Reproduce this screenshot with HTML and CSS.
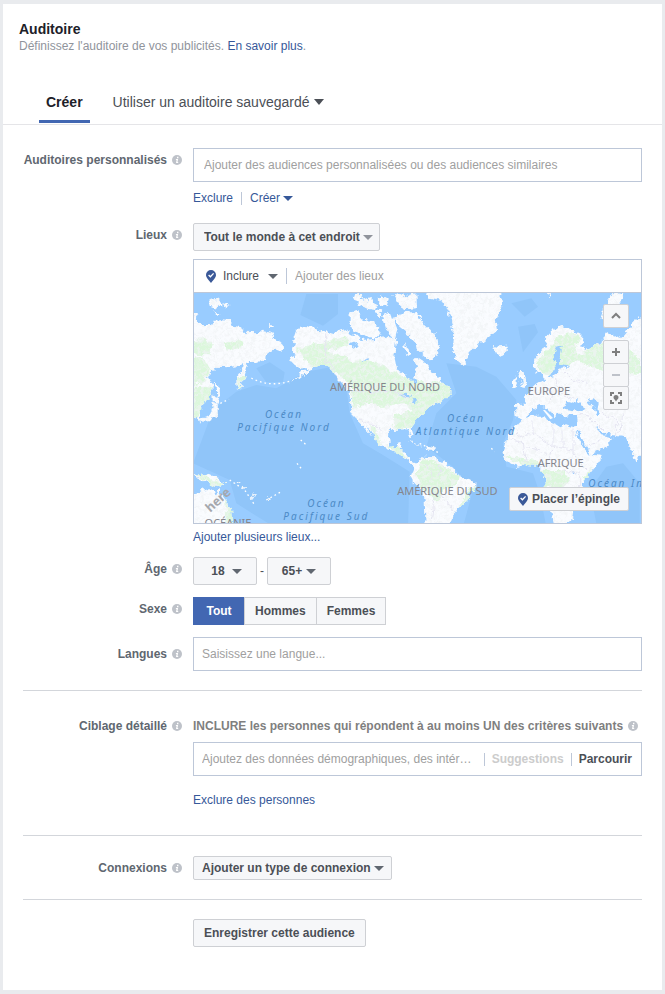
FILE: index.html
```
<!DOCTYPE html>
<html lang="fr">
<head>
    <meta charset="UTF-8">
    <meta name="viewport" content="width=device-width, initial-scale=1.0">
    <title>Auditoire</title>
    <link rel="stylesheet" href="styles.css">
</head>
<body>
    <!-- icônes communes -->
    <svg class="sprite" aria-hidden="true">
        <symbol id="info" viewBox="0 0 10 10">
            <circle cx="5" cy="5" r="5" fill="#bec2c9"/>
            <path d="M5 1.8h1.4v1.4H5zM4 4h2.1L5.5 7.1h.8L6.1 8H4l.6-3.1h-.8z" fill="#fff"/>
        </symbol>
        <symbol id="pin" viewBox="0 0 10 13">
            <path d="M5 0a5 5 0 0 1 5 5c0 3-3 5-5 8C3 10 0 8 0 5a5 5 0 0 1 5-5z" fill="#3b5998"/>
            <path d="M2.6 5l1.8 1.8 3.2-3.4" fill="none" stroke="#fff" stroke-width="1.3"/>
        </symbol>
    </svg>

    <main class="panel">
        <header class="head">
            <h1>Auditoire</h1>
            <p>Définissez l'auditoire de vos publicités. <a href="#">En savoir plus</a>.</p>
        </header>

        <nav class="tabs">
            <button type="button" class="tab active">Créer</button>
            <button type="button" class="tab">Utiliser un auditoire sauvegardé <span class="caret big"></span></button>
        </nav>

        <form class="form">
            <section>
                <div class="row">
                    <label class="label" for="custom">Auditoires personnalisés <svg class="info"><use href="#info"/></svg></label>
                    <div class="field">
                        <input class="text wide" id="custom" type="text" placeholder="Ajouter des audiences personnalisées ou des audiences similaires">
                        <div class="links">
                            <a href="#">Exclure</a>
                            <span class="sep"></span>
                            <button type="button" class="link">Créer <span class="caret"></span></button>
                        </div>
                    </div>
                </div>

                <div class="row">
                    <label class="label" for="places">Lieux <svg class="info"><use href="#info"/></svg></label>
                    <div class="field">
                        <span class="select where">
                            <select aria-label="Personnes"><option>Tout le monde à cet endroit</option></select>
                        </span>
                        <div class="location">
                            <div class="location-bar">
                                <svg class="pin"><use href="#pin"/></svg>
                                <span class="select plain">
                                    <select aria-label="Mode"><option>Inclure</option></select>
                                </span>
                                <span class="sep"></span>
                                <input id="places" type="text" placeholder="Ajouter des lieux">
                            </div>
                            <div class="map">
                                <svg class="world" viewBox="3 9 1341 690" role="img" aria-label="Carte du monde">
                                    <defs>
                                        <filter id="coast" x="-5%" y="-5%" width="110%" height="110%">
                                            <feTurbulence type="fractalNoise" baseFrequency="0.06" numOctaves="3" seed="4"/>
                                            <feDisplacementMap in="SourceGraphic" scale="22" xChannelSelector="R" yChannelSelector="G"/>
                                        </filter>
                                        <filter id="grain" x="0" y="0" width="100%" height="100%">
                                            <feTurbulence type="fractalNoise" baseFrequency="0.09" numOctaves="3" seed="9" result="n"/>
                                            <feColorMatrix in="n" values="0 0 0 0 .88  0 0 0 0 .9  0 0 0 0 .92  4 0 0 0 -1.7"/>
                                            <feComposite in2="SourceGraphic" operator="in"/>
                                        </filter>
                                        <clipPath id="land-clip"><use href="#land"/></clipPath>
                                    </defs>
                                    <rect width="1350" height="710" fill="#99ccff"/>
                                    <!-- eaux profondes -->
                                    <g fill="#90c5f9">
                                        <path d="M340 12h95v60l-45 35-68-32z"/>
                                        <path d="M190 235l40-18 45 30-5 30-50 0zM0 520l60-160 70-55 60-20 60 10 90-50 80-15 40 60 10 80 40 90 60 35 80 50-5 170H250L130 640 110 570z"/>
                                        <path d="M955 40l60-15 20 25-40 30zM975 110l50-8 10 25-45 60zM760 220l90 10 60 30 60 70-10 60-30 70 10 70 80 20 20 60 20 100H810l30-110-60-70-80-60 30-100 60-60z"/>
                                        <path d="M1190 600l50-70 50-10 50 60v120h-130z"/>
                                    </g>
                                    <g filter="url(#coast)">
                                        <path id="land" fill="#fafcff" d="
                                            M-10 70L10 80 20 105 55 105 62 90 85 88 110 92 118 105 145 108 152 128 190 130 210 122 235 130 245 150 262 158 274 170 265 182 247 175 238 182 228 193 205 213 175 220 162 218 164 240 157 262 145 285 132 300 130 275 135 256 147 238 150 222 110 232 70 230 45 262 62 290 50 322 25 345 22 398 8 380 -10 400z
                                            M66 275l8 5 6 40-9 2zM62 340l12 0 0 35-28 18-25 2 2-9 26-8zM62 320l16 4-4 14-12-2z
                                            M48 32l26-6 12 16-14 14-22-8zM90 40l20 8-14 6zM64 64l14 11-12 2zM228 103h14v8h-14z
                                            M300 150L308 125 322 110 340 105 400 125 425 132 440 122 460 116 465 130 485 135 500 150 545 148 580 140 610 145 604 200 612 240 635 252 655 272 668 285 664 262 672 235 660 212 672 200 690 212 712 240 735 258 750 278 775 300 775 316 750 328 740 338 712 345 702 358 672 388 655 410 662 440 652 440 645 418 595 420 587 440 592 468 608 477 614 455 629 453 625 478 620 482 642 490 650 512 672 522 690 500 720 502 770 525 800 562 850 577 850 590 832 605 822 635 785 667 765 710 698 710 695 630 688 602 664 578 653 558 662 530 640 510 610 485 575 475 552 458 540 435 518 402 536 440 524 425 490 388 472 350 470 305 450 282 430 262 418 240 395 225 375 225 340 247 318 264 295 276 325 250 345 235 320 235 300 220 290 205 310 195 290 175 312 165z
                                            M482 18l18-6 10 20 22-8 20 22-6 14-26-4-22-12zM470 65l26-6 8 26 28 6 14 10 20 25-10 16-36 0-22-14-20-6-8-28z
                                            M598 15l24-6 18 10 30-10 2 46-34 2-22-12zM560 15l26 15-6 22-16-6-10-16zM568 75l22-10 12 30 10 26-8 30-22-34z
                                            M545 60l20 5 -8 15zM620 75l32-12 22 10 26 36 32 28 6 36-14 36-14 2-36-30-2-20-22-26-34-28-16-24zM630 160l16 14 4 22-12-6z
                                            M697 5L920 5 928 45 908 90 912 120 878 145 847 175 828 185 822 212 810 228 794 215 777 175 782 120 765 60 745 32 712 27z
                                            M900 165l22 4 22-2 0 16-22 14-16-6z
                                            M640 455l24 4 24 8M700 467l20 4 6 8-20 0z
                                            M-10 610L20 603 40 596 60 600 65 616 76 596 86 615 100 632 118 665 120 710 -10 710z
                                            M0 547l20 12 26-8 28 14 24 18-16 10-26-8-28-12-18-10z
                                            M110 563l18 8M128 572l16 10-6 4zM148 585l8 8-5 3zM180 608l6 16-5 2zM222 618l8 6-5 8z
                                            M1262 5l35 5-10 22-24 10-26 50-12-4 10-40z
                                            M1062 10h16l-4 8z
                                            M1022 235L1024 210 1058 165 1062 140 1082 118 1107 108 1145 124 1167 135 1178 158 1160 168 1187 178 1232 150 1245 130 1287 145 1310 118 1320 92 1350 78 1350 505 1342 490 1328 520 1312 470 1298 442 1232 432 1218 412 1235 432 1258 445 1244 468 1190 493 1226 498 1215 522 1170 575 1167 605 1150 640 1140 685 1105 710 1078 695 1062 610 1056 565 1040 528 1000 525 970 530 938 510 929 488 940 445 972 405 987 388 968 382 966 345 1000 344 992 318 1028 285 1055 268 1050 258 1030 244z
                                            M976 240l16 0 2 24 10 22-8 10-16-4 6-20zM960 270l14-8 0 24-14 8z"/>
                                        <g clip-path="url(#land-clip)" fill="#dcf7dc">
                                            <path d="M0 150l40-2 22 18-12 22-30 8-20-8zM85 160l55-10 10 18-48 14zM0 200l32 8 22 32-12 24-42 30zM0 290l60 2-10 40-50 60zM132 262l26-2-24 40z"/>
                                            <path d="M312 178l40-14 44-8 60-16 18 20-28 10-46 12 60 20 16 16 44-8 30 6 60 34 95 30 54-10 80 50-30 30-40 40-40 10-40-20-60-40-60 10-50-10-22-26-28-34-34-30-40-6-36-4z"/>
                                            <path d="M472 300l60 6-16 40-38 8zM530 405l18 10 20 50-20-8zM580 465l44 8 20 36-40-24zM600 380l60-20 50-8-34 34-24 26-46 6z"/>
                                            <path d="M690 505l50 15 60 40-14 24-40 20-12 34-26-28-30-20-10-40zM830 590l20-4-24 50-30 20zM95 600l28 50v60h-22zM0 550l100 30-26 16z"/>
                                            <path d="M1028 222l40-50 30-36 50-4 20 20-24 16 14 36-30 24-34-4-20 34-30-10zM1146 200l78-44 60 4 60 50v42l-110-8-60-20z"/>
                                            <path d="M940 498l90 12 12 16-50 4zM1042 540l70 0 16 30-14 24-58-2zM1170 560l30-30-20 50z"/>
                                        </g>
                                    </g>
                                    <g filter="url(#coast)" opacity=".7">
                                        <use href="#land" filter="url(#grain)"/>
                                    </g>
                                    <!-- mers intérieures et lacs -->
                                    <g fill="#99ccff" filter="url(#coast)">
                                        <path d="M997 383l20-23 17-12 13-3 15 13 15 14 10 13 10-13 15 13 15-10 25 0 2 30-17 7-20-7-15 7-15-10-25-7-12-15h-28z"/>
                                        <path d="M1112 355l10-23 20 6 10-8 20 20 5 8-25 4zM1184 330l18-5 15 15-5 15 15 20-15 0-10-20z"/>
                                        <path d="M1147 420l10 5 15 30 17 27-2 12-12-14-15-25zM1204 408l30 20 20 2-4 10-22-4z"/>
                                        <path d="M1088 228l-6-33 10-22 16-4-6 18-4 34 34 8-30 4-10 22-28 10 12-18z"/>
                                        <path d="M470 165l26-10-8 20zM505 212l26-8-4 8zM615 315l30-4 8 12zM655 325l20 8-14 6zM1140 545l8 0-2 12z"/>
                                    </g>
                                    <path d="M1050 360l6 0 24 24-8 4z" fill="#fafcff"/>
                                    <!-- frontières -->
                                    <g class="borders" filter="url(#coast)">
                                        <path d="M398 130v85l30 25M495 388l30 12 24 8 20 22M478 305h130l40 20"/>
                                        <path d="M960 410l20 30 40-10 0-40M950 445l40 10 10 60M1020 430l60 40-10 40M1080 400v70l60 10M1140 415v80l40 40M1110 420l0 60M1000 470l60 20M1110 540l50 10 0 60M1070 600l60 0 0 60"/>
                                        <path d="M1050 290l30 20-10 30M1090 260l10 50 40 20M1110 240l30 30 40 10M1150 370l40 10 40 40M1230 370l40 20 0 50M1290 370l-10 60M1180 470l40-20"/>
                                        <path d="M700 520l20 40-20 30M740 520l0 40M700 600l50 20 30 40M725 610l-10 80"/>
                                    </g>
                                    <!-- îles Aléoutiennes et Hawaï -->
                                    <g class="islets">
                                        <path d="M175 264q55 30 120 8"/>
                                        <path d="M323 450l15 13M82 340l26-12M312 520l18 22"/>
                                        <path d="M110 570l45 30 30 45M220 630l45-25M680 460l60 30M895 475l10 10"/>
                                    </g>
                                    <g class="land-names">
                                        <text x="576" y="302">AMÉRIQUE DU NORD</text>
                                        <text x="1068" y="314">EUROPE</text>
                                        <text x="1103" y="530">AFRIQUE</text>
                                        <text x="763" y="616">AMÉRIQUE DU SUD</text>
                                        <text x="105" y="710">OCÉANIE</text>
                                    </g>
                                    <g class="sea-names">
                                        <text x="273" y="383">Océan</text>
                                        <text x="273" y="422">Pacifique Nord</text>
                                        <text x="819" y="395">Océan</text>
                                        <text x="819" y="434">Atlantique Nord</text>
                                        <text x="400" y="650">Océan</text>
                                        <text x="400" y="689">Pacifique Sud</text>
                                        <text x="1310" y="592">Océan Indien</text>
                                    </g>
                                    <text class="brand" x="52" y="668" transform="rotate(-42 52 668)">here</text>
                                </svg>
                                <div class="controls">
                                    <button type="button" aria-label="Réduire la carte"><svg viewBox="0 0 12 12"><path d="M2 8l4-4 4 4"/></svg></button>
                                    <div class="zoom">
                                        <button type="button" aria-label="Zoom avant"><svg viewBox="0 0 12 12"><path d="M2 6h8M6 2v8"/></svg></button>
                                        <button type="button" aria-label="Zoom arrière" disabled><svg viewBox="0 0 12 12"><path d="M2 6h8"/></svg></button>
                                        <button type="button" aria-label="Recentrer"><svg viewBox="0 0 12 12"><path d="M1 4V1h3M8 1h3v3M11 8v3H8M4 11H1V8"/><path class="fill" d="M6 3a2.500 2.500 0 0 1 2.500 2.500C8.500 7 7 7.500 6 9.500 5 7.500 3.500 7 3.500 5.500A2.500 2.500 0 0 1 6 3z"/></svg></button>
                                    </div>
                                </div>
                                <button type="button" class="drop-pin"><svg class="pin"><use href="#pin"/></svg>Placer l’épingle</button>
                            </div>
                        </div>
                        <a class="more" href="#">Ajouter plusieurs lieux...</a>
                    </div>
                </div>

                <div class="row">
                    <label class="label" for="age-min">Âge <svg class="info"><use href="#info"/></svg></label>
                    <div class="field ages">
                        <span class="select age"><select id="age-min"><option>18</option></select></span>
                        <span>-</span>
                        <span class="select age"><select aria-label="Âge maximum"><option>65+</option></select></span>
                    </div>
                </div>

                <div class="row" role="radiogroup" aria-labelledby="sex">
                    <span class="label" id="sex">Sexe <svg class="info"><use href="#info"/></svg></span>
                    <div class="field segments">
                        <label><input type="radio" name="sex" checked><span>Tout</span></label>
                        <label><input type="radio" name="sex"><span>Hommes</span></label>
                        <label><input type="radio" name="sex"><span>Femmes</span></label>
                    </div>
                </div>

                <div class="row middle">
                    <label class="label" for="lang">Langues <svg class="info"><use href="#info"/></svg></label>
                    <div class="field">
                        <input class="text" id="lang" type="text" placeholder="Saisissez une langue...">
                    </div>
                </div>
            </section>

            <section class="targeting">
                <div class="row">
                    <label class="label" for="target">Ciblage détaillé <svg class="info"><use href="#info"/></svg></label>
                    <div class="field">
                        <h2>INCLURE les personnes qui répondent à au moins UN des critères suivants <svg class="info"><use href="#info"/></svg></h2>
                        <div class="text browse">
                            <input id="target" type="text" placeholder="Ajoutez des données démographiques, des intérêts ou des comportements">
                            <span class="sep"></span>
                            <button type="button" disabled>Suggestions</button>
                            <span class="sep"></span>
                            <button type="button">Parcourir</button>
                        </div>
                        <a class="exclude" href="#">Exclure des personnes</a>
                    </div>
                </div>
            </section>

            <section>
                <div class="row">
                    <label class="label" for="connection">Connexions <svg class="info"><use href="#info"/></svg></label>
                    <div class="field">
                        <span class="select small"><select id="connection"><option>Ajouter un type de connexion</option></select></span>
                    </div>
                </div>
            </section>

            <section>
                <div class="row">
                    <div class="field last">
                        <button type="submit" class="save">Enregistrer cette audience</button>
                    </div>
                </div>
            </section>
        </form>
    </main>
</body>
</html>
```

FILE: styles.css
```
* {
    box-sizing: border-box;
}
body {
    margin: 0;
    padding: 4px 3px;
    min-height: 100vh;
    display: flex;
    background: #e9ebee;
    color: #4b4f56;
    font-family: "Liberation Sans", Arial, sans-serif;
    font-size: 12px;
    line-height: 16px;
}
button, input, select {
    font: inherit;
    color: inherit;
    margin: 0;
    padding: 0;
    border: 0;
    background: none;
    outline: 0;
}
input::placeholder {
    color: #a0a0a0;
    opacity: 1;
}
a, .link {
    color: #365899;
    text-decoration: none;
}
.sprite {
    display: none;
}
.panel {
    flex: 1;
    min-width: 0;
    background: #fff;
}

/* en-tête */
.head {
    padding: 17px 16px 0;
}
.head h1 {
    margin: 0 0 1px;
    font-size: 14px;
    color: #1d2129;
}
.head p {
    margin: 0;
    color: #90949c;
}
.tabs {
    display: flex;
    gap: 16px;
    padding: 27px 36px 1px;
    border-bottom: 1px solid #e5e5e8;
}
.tab {
    display: flex;
    align-items: center;
    gap: 5px;
    height: 42px;
    padding: 3px 7px 0;
    font-size: 14px;
    border-bottom: 3px solid transparent;
}
.tab.active {
    font-weight: bold;
    color: #1d2129;
    border-color: #4267b2;
}
.caret {
    display: inline-block;
    border: 5px solid transparent;
    border-top-color: currentColor;
    border-bottom: 0;
}
.caret.big {
    border-width: 6px 5px 0;
}

/* formulaire */
.form {
    padding: 3px 20px 0;
}
section {
    padding: 20px 0 19px;
    border-bottom: 1px solid #d3d6db;
}
section:last-child {
    padding-top: 19px;
    border-bottom: 0;
}
.row {
    display: grid;
    grid-template-columns: 159px minmax(0, 1fr);
    column-gap: 11px;
    align-items: start;
    margin-bottom: 12px;
}
.row:last-child {
    margin-bottom: 0;
}
.row.middle {
    align-items: center;
}
.label {
    display: flex;
    align-items: center;
    justify-content: flex-end;
    gap: 5px;
    padding-top: 4px;
    font-weight: bold;
    color: #606770;
    white-space: nowrap;
}
.middle .label {
    padding-top: 0;
}
.info {
    width: 10px;
    height: 10px;
    flex: none;
}
.text {
    display: block;
    width: 100%;
    height: 34px;
    padding: 0 8px;
    border: 1px solid #bdc7d8;
}
.text.wide {
    padding: 0 10px;
}
.sep {
    width: 1px;
    height: 13px;
    background: #bdc7d8;
}
.links {
    display: flex;
    align-items: center;
    gap: 8px;
    margin: 8px 0 5px;
}
.link {
    display: flex;
    align-items: center;
    gap: 3px;
}

/* listes déroulantes */
.select {
    position: relative;
    display: inline-block;
    vertical-align: top;
}
.select select {
    appearance: none;
    display: block;
    height: 28px;
    padding: 0 19px 0 10px;
    font-weight: bold;
    background: #f6f7f9;
    border: 1px solid #ced0d4;
    border-radius: 2px;
}
.select::after {
    content: "";
    position: absolute;
    top: 50%;
    right: 7px;
    margin-top: -2px;
    border: 5px solid transparent;
    border-top-color: #606770;
    border-bottom: 0;
    pointer-events: none;
}
.where::after {
    border-top-color: #90949c;
}
.select.small select {
    height: 24px;
    padding: 0 20px 0 8px;
}
.select.small::after {
    right: 8px;
}
.select.plain select {
    padding: 0 22px 0 0;
    height: 32px;
    font-weight: normal;
    background: none;
    border: 0;
}
.select.plain::after {
    right: 4px;
}
.select.age select {
    width: 64px;
    padding: 0 26px 0 12px;
    text-align-last: center;
}
.select.age::after {
    right: 15px;
}
.ages {
    display: flex;
    align-items: center;
    gap: 3px;
}

/* lieux */
.location {
    margin-top: 8px;
    border: 1px solid #bdc7d8;
}
.location-bar {
    display: flex;
    align-items: center;
    border-bottom: 1px solid #bdc7d8;
}
.location-bar .pin {
    margin: 0 7px 0 12px;
}
.location-bar .sep {
    height: 16px;
    margin: 0 8px 0 4px;
}
.location-bar input {
    flex: 1;
    min-width: 0;
}
.pin {
    width: 10px;
    height: 13px;
    flex: none;
}
.map {
    position: relative;
}
.world {
    display: block;
    width: 100%;
    height: auto;
}
.borders {
    fill: none;
    stroke: #e6e6f2;
    stroke-width: 3;
}
.islets {
    fill: none;
    stroke: #fff;
    stroke-width: 4;
    stroke-dasharray: 5 9;
}
.land-names {
    font-family: "Noto Sans", sans-serif;
    font-size: 33px;
    text-anchor: middle;
    fill: #85858d;
}
.sea-names {
    font-family: "Noto Sans", sans-serif;
    font-size: 30px;
    font-style: italic;
    letter-spacing: 6px;
    text-anchor: middle;
    fill: #4c8ac6;
}
.brand {
    font-family: "Noto Sans", sans-serif;
    font-size: 38px;
    font-weight: bold;
    fill: #a5a8ae;
}
.controls {
    position: absolute;
    top: 11px;
    right: 12px;
    display: grid;
    gap: 12px;
}
.controls button {
    display: grid;
    place-items: center;
    width: 26px;
    height: 24px;
    background: #f6f7f9;
    border: 1px solid #ced0d4;
    border-radius: 2px;
}
.zoom button + button {
    margin-top: -1px;
}
.controls svg {
    width: 12px;
    height: 12px;
    fill: none;
    stroke: #7f7f7f;
    stroke-width: 2;
}
.controls button:disabled svg {
    stroke: #bec2c9;
}
.controls .fill {
    fill: #7f7f7f;
    stroke: none;
}
.drop-pin {
    position: absolute;
    right: 12px;
    bottom: 12px;
    display: flex;
    align-items: center;
    gap: 4px;
    height: 24px;
    padding: 0 8px;
    font-weight: bold;
    background: #f6f7f9;
    border: 1px solid #ced0d4;
    border-radius: 2px;
}
.more {
    display: block;
    margin-top: 5px;
}

/* sexe */
.segments {
    display: flex;
}
.segments input {
    position: absolute;
    opacity: 0;
}
.segments span {
    display: block;
    min-width: 52px;
    padding: 5px 10px;
    text-align: center;
    font-weight: bold;
    background: #f6f7f9;
    border: 1px solid #ced0d4;
}
.segments label + label span {
    margin-left: -1px;
}
.segments input:checked + span {
    color: #fff;
    background: #4267b2;
    border-color: #4267b2;
}

/* ciblage */
.targeting {
    padding: 27px 0;
}
h2 {
    display: flex;
    align-items: center;
    gap: 5px;
    margin: 0 0 8px;
    font-size: 12px;
    color: #7f7f7f;
    white-space: nowrap;
}
.targeting .label {
    padding: 0;
}
.browse {
    display: flex;
    align-items: center;
    gap: 7px;
}
.browse input {
    flex: 1;
    min-width: 0;
    margin-right: 4px;
    text-overflow: ellipsis;
}
.browse button {
    font-weight: bold;
}
.browse button:last-child {
    padding-right: 1px;
}
.browse button:disabled {
    color: #ccc;
}
.exclude {
    display: block;
    margin-top: 16px;
}
.last {
    grid-column: 2;
}
.save {
    height: 28px;
    padding: 0 10px;
    font-weight: bold;
    background: #f6f7f9;
    border: 1px solid #ced0d4;
    border-radius: 2px;
}
```
